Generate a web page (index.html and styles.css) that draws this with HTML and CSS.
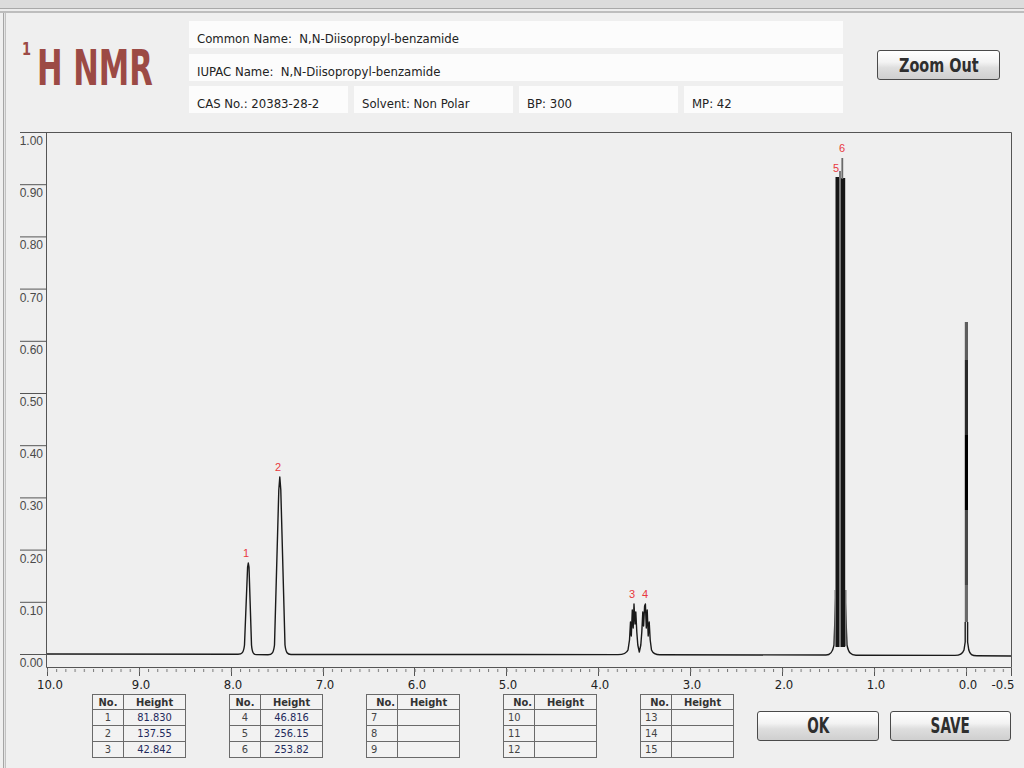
FILE: index.html
```html
<!DOCTYPE html>
<html>
<head>
<meta charset="utf-8">
<title>1H NMR</title>
<link rel="stylesheet" href="styles.css">
</head>
<body>
<div class="titlebar"></div>
<div class="window">
  <header class="header">
    <h1 class="title"><span class="sup">1</span><span class="title-text">H NMR</span></h1>
    <div class="fields">
      <div class="field row1">Common Name:&nbsp; N,N-Diisopropyl-benzamide</div>
      <div class="field row2">IUPAC Name:&nbsp; N,N-Diisopropyl-benzamide</div>
      <div class="field-row">
        <div class="field">CAS No.: 20383-28-2</div>
        <div class="field">Solvent: Non Polar</div>
        <div class="field">BP: 300</div>
        <div class="field">MP: 42</div>
      </div>
    </div>
    <div class="zoom-wrap"><button class="btn btn-zoom"><span class="lbl">Zoom Out</span></button></div>
  </header>

  <svg class="chart" width="1020" height="572" viewBox="4 120 1020 572" xmlns="http://www.w3.org/2000/svg">
    <defs>
      <pattern id="minor" x="47" y="0" width="9.19" height="10" patternUnits="userSpaceOnUse">
        <rect x="0" y="0" width="1" height="10" fill="#777"/>
      </pattern>
    </defs>
    <g class="frame">
      <path d="M20,132.5 H1011.5 V667.5 H46.5 V132.5"/>
      <path d="M20,184.7 H46 M20,236.9 H46 M20,289.1 H46 M20,341.3 H46 M20,393.5 H46 M20,445.7 H46 M20,497.9 H46 M20,550.1 H46 M20,602.3 H46 M20,654.5 H46"/>
      <path d="M47.5,668 V676 M139.5,668 V676 M231.5,668 V676 M323.5,668 V676 M414.5,668 V676 M506.5,668 V676 M598.5,668 V676 M690.5,668 V676 M782.5,668 V676 M874.5,668 V676 M966.5,668 V676 M1011.5,668 V676"/>
    </g>
    <rect x="46.5" y="669" width="965.5" height="3" fill="url(#minor)"/>

    <g class="ylabels">
      <text x="43" y="145">1.00</text>
      <text x="43" y="197.2">0.90</text>
      <text x="43" y="249.4">0.80</text>
      <text x="43" y="301.6">0.70</text>
      <text x="43" y="353.8">0.60</text>
      <text x="43" y="406">0.50</text>
      <text x="43" y="458.2">0.40</text>
      <text x="43" y="510.4">0.30</text>
      <text x="43" y="562.6">0.20</text>
      <text x="43" y="614.8">0.10</text>
      <text x="43" y="667">0.00</text>
    </g>
    <g class="xlabels">
      <text x="50" y="689">10.0</text>
      <text x="141" y="689">9.0</text>
      <text x="233" y="689">8.0</text>
      <text x="325" y="689">7.0</text>
      <text x="417" y="689">6.0</text>
      <text x="508" y="689">5.0</text>
      <text x="600" y="689">4.0</text>
      <text x="692" y="689">3.0</text>
      <text x="784" y="689">2.0</text>
      <text x="876" y="689">1.0</text>
      <text x="968" y="689">0.0</text>
      <text x="1003" y="689">-0.5</text>
    </g>

    <path class="spec" d="M47,654 L238,654.3 C242,654.3 243.5,653 244.5,645 L247.6,567 L248.3,563 L249,567 L251.5,645 C252.3,653 253.5,654.6 256,654.6 L268,654.8 C272,654.8 273.5,653 274.5,645 L278.8,490 L279.8,477 L280.8,490 L285,645 C286,653 287.5,654.5 291,654.5 L618,654.6 C624,654.6 626.5,653.5 628,650 L629.5,640 L630.5,622 L631.3,636 L632.3,610 L633.2,628 L634,604 L635,624 L635.8,612 L636.8,632 L637.8,645 L639.3,652 L640.8,645 L641.8,632 L642.8,612 L643.6,626 L644.6,606 L645.4,604 L646.3,628 L647.2,610 L648.2,636 L649.2,622 L650.2,640 L651.5,650 C653,653.5 655,654.8 660,654.8 L826,655 C830,655 832.5,653 834,645 L835.8,595 M845,595 L847,645 C848.5,653 851,655.2 856,655.2 L955,655.4 C960,655.4 962.5,654 964,650 L965.2,642 L965.2,622 M967.6,622 L967.6,642 L968.8,650 C970,654.5 972,655.8 977,655.8 L1011,656"/>

    <g class="bars">
      <rect x="835.5" y="177" width="3.6" height="470" fill="#161616"/>
      <rect x="839" y="171" width="2" height="476" fill="#7a7a7a"/>
      <rect x="841" y="178" width="4.2" height="469" fill="#161616"/>
      <rect x="841.4" y="158" width="1.8" height="21" fill="#6a6a6a"/>
      <rect x="834.5" y="590" width="1.5" height="56" fill="#777"/>
      <rect x="845" y="590" width="1.5" height="56" fill="#777"/>
      <rect x="964.8" y="322" width="3.2" height="38" fill="#5e5e5e"/>
      <rect x="964.8" y="360" width="3.2" height="75" fill="#2a2a2a"/>
      <rect x="964.8" y="435" width="3.2" height="75" fill="#000"/>
      <rect x="964.8" y="510" width="3.2" height="75" fill="#484848"/>
      <rect x="964.8" y="585" width="3.2" height="37" fill="#6a6a6a"/>
    </g>

    <g class="plabels">
      <text x="246" y="557">1</text>
      <text x="278" y="471">2</text>
      <text x="632" y="598">3</text>
      <text x="645" y="598">4</text>
      <text x="836" y="172">5</text>
      <text x="842" y="152">6</text>
    </g>
  </svg>

  <footer class="footer">
    <div class="tables">
      <table class="peaks">
        <colgroup><col class="c-no"><col class="c-h"></colgroup>
        <tr><th>No.</th><th>Height</th></tr>
        <tr><td>1</td><td class="v">81.830</td></tr>
        <tr><td>2</td><td class="v">137.55</td></tr>
        <tr><td>3</td><td class="v">42.842</td></tr>
      </table>
      <table class="peaks">
        <colgroup><col class="c-no"><col class="c-h"></colgroup>
        <tr><th>No.</th><th>Height</th></tr>
        <tr><td>4</td><td class="v">46.816</td></tr>
        <tr><td>5</td><td class="v">256.15</td></tr>
        <tr><td>6</td><td class="v">253.82</td></tr>
      </table>
      <table class="peaks alt">
        <colgroup><col class="c-no"><col class="c-h"></colgroup>
        <tr><th>No.</th><th>Height</th></tr>
        <tr><td>7</td><td class="v"></td></tr>
        <tr><td>8</td><td class="v"></td></tr>
        <tr><td>9</td><td class="v"></td></tr>
      </table>
      <table class="peaks alt">
        <colgroup><col class="c-no"><col class="c-h"></colgroup>
        <tr><th>No.</th><th>Height</th></tr>
        <tr><td>10</td><td class="v"></td></tr>
        <tr><td>11</td><td class="v"></td></tr>
        <tr><td>12</td><td class="v"></td></tr>
      </table>
      <table class="peaks alt">
        <colgroup><col class="c-no"><col class="c-h"></colgroup>
        <tr><th>No.</th><th>Height</th></tr>
        <tr><td>13</td><td class="v"></td></tr>
        <tr><td>14</td><td class="v"></td></tr>
        <tr><td>15</td><td class="v"></td></tr>
      </table>
    </div>
    <div class="actions">
      <button class="btn btn-ok"><span class="lbl">OK</span></button>
      <button class="btn btn-save"><span class="lbl">SAVE</span></button>
    </div>
  </footer>
</div>
</body>
</html>
```

FILE: styles.css
```css
* {
  box-sizing: border-box;
  margin: 0;
  padding: 0;
}

html, body {
  width: 1024px;
  height: 768px;
  overflow: hidden;
}

body {
  background: #efefef;
  font-family: "DejaVu Sans Condensed", "Liberation Sans", sans-serif;
  color: #222;
}

.titlebar {
  height: 13px;
  background: linear-gradient(to bottom, #dcdcdc 0 8px, #a9a9a9 8px 9px, #ececec 9px 11px, #bdbdbd 11px 13px);
}

.window {
  height: 755px;
  margin-left: 3px;
  border-left: 1px solid #a5a5a5;
  box-shadow: inset 1px 0 #e4e4e4, inset 2px 0 #c2c2c2;
}

/* header */
.header {
  display: flex;
  align-items: flex-start;
  padding-top: 8px;
}

.title {
  width: 185px;
  padding-left: 18px;
  margin-top: 22px;
  font-size: 50px;
  line-height: 50px;
  font-weight: bold;
  color: #9c4a45;
  white-space: nowrap;
}

.title .sup {
  display: inline-block;
  font-size: 18px;
  line-height: 0;
  vertical-align: 30px;
  margin-right: 4px;
  transform: scaleX(0.8);
  transform-origin: left center;
}

.title-text {
  display: inline-block;
  transform: scaleX(0.68);
  transform-origin: left center;
}

.fields {
  width: 654px;
  display: flex;
  flex-direction: column;
}

.field {
  height: 27px;
  background: #fcfcfc;
  padding: 8px 0 0 8px;
  font-size: 13px;
  line-height: 19px;
  white-space: nowrap;
  color: #222;
}

.row1 {
  margin-bottom: 6px;
}

.row2 {
  margin-bottom: 5px;
}

.field-row {
  display: flex;
  gap: 6px;
}

.field-row .field {
  flex: 1;
}

.zoom-wrap {
  margin-left: 34px;
  padding-top: 29px;
}

/* buttons */
.btn {
  display: block;
  height: 30px;
  border: 1px solid #4a4a4a;
  border-radius: 3px;
  background: linear-gradient(to bottom, #ffffff 0%, #f3f3f3 40%, #dedede 60%, #cfcfcf 100%);
  font-family: "DejaVu Sans Condensed", "Liberation Sans", sans-serif;
  font-weight: bold;
  color: #2e2e2e;
  text-align: center;
  white-space: nowrap;
}

.btn .lbl {
  display: inline-block;
}

.btn-zoom {
  width: 123px;
  font-size: 20px;
}

.btn-zoom .lbl {
  transform: scaleX(0.8);
}

.btn-ok {
  width: 122px;
  font-size: 21px;
}

.btn-save {
  width: 121px;
  font-size: 21px;
}

.btn-ok .lbl,
.btn-save .lbl {
  transform: scaleX(0.72);
}

/* chart */
.chart {
  display: block;
  margin-top: 7px;
}

.frame path {
  stroke: #555;
  stroke-width: 1;
  fill: none;
}

.ylabels text {
  font-family: "Liberation Sans", Arial, sans-serif;
  font-size: 12px;
  fill: #4a4a4a;
  text-anchor: end;
}

.xlabels text {
  font-family: "DejaVu Sans Condensed", "Liberation Sans", sans-serif;
  font-size: 13px;
  fill: #222;
  text-anchor: middle;
}

.spec {
  fill: none;
  stroke: #1a1a1a;
  stroke-width: 1.4;
  stroke-linejoin: round;
}

.plabels text {
  font-family: "Liberation Sans", Arial, sans-serif;
  font-size: 11px;
  fill: #e8383d;
  text-anchor: middle;
}

/* footer */
.footer {
  display: flex;
  margin-top: 2px;
  padding-left: 88px;
}

.tables {
  display: flex;
  gap: 43px;
}

.peaks {
  width: 93px;
  border-collapse: collapse;
  table-layout: fixed;
  border: 1px solid #505050;
  font-size: 11px;
  background: #f2f2f2;
}

.c-no {
  width: 31px;
}

.c-h {
  width: 62px;
}

.peaks th,
.peaks td {
  border: 1px solid #6a6a6a;
  padding: 0 2px;
  text-align: center;
  white-space: nowrap;
}

.peaks th {
  height: 15px;
  line-height: 13px;
  font-weight: bold;
  color: #333;
}

.peaks td {
  height: 16px;
  line-height: 14px;
  color: #444;
}

.peaks td.v {
  color: #1f2a5c;
}

.peaks.alt th:first-child {
  text-align: right;
}

.peaks.alt td:first-child {
  text-align: left;
  padding-left: 4px;
}

.actions {
  display: flex;
  gap: 11px;
  margin-left: 23px;
  padding-top: 17px;
}
```
